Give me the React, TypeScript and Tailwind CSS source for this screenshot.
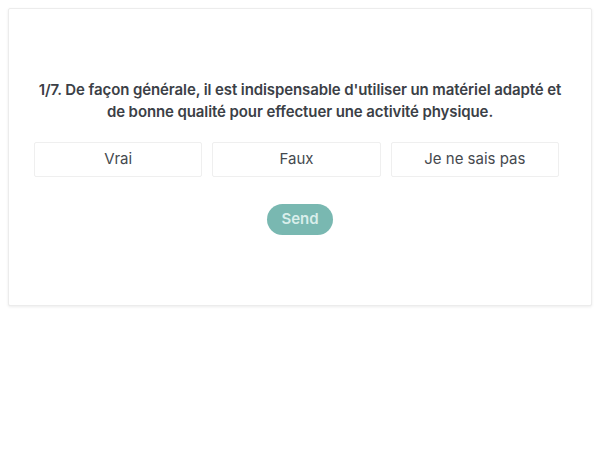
import React, { useState } from 'react';

const options = ['Vrai', 'Faux', 'Je ne sais pas'];

export default function App() {
  const [selected, setSelected] = useState<string | null>(null);

  return (
    <div className="min-h-screen bg-white p-2" style={{ fontFamily: 'Inter, "Noto Sans", sans-serif' }}>
      <div className="w-[584px] bg-white border border-[#ececec] rounded-[2px] shadow-[0_1px_3px_rgba(0,0,0,0.08)] pt-[70px] pb-[70px]">
        <p className="px-[27px] text-center text-[15px] leading-[22px] font-semibold tracking-[-0.1px] text-[#3b4046]">
          1/7. De façon générale, il est indispensable d'utiliser un matériel adapté et de bonne qualité pour effectuer une activité physique.
        </p>

        <div className="ml-[25px] w-[525px] mt-[19px] flex gap-[10px]">
          {options.map((opt) => (
            <button
              key={opt}
              onClick={() => setSelected(opt)}
              className={`flex-1 h-[35px] border border-[#efefef] rounded-[2px] text-[15px] text-[#45494e] ${
                selected === opt ? 'bg-[#f3f8f7]' : 'bg-white'
              }`}
            >
              {opt}
            </button>
          ))}
        </div>

        <div className="mt-[27px] flex justify-center">
          <button className="h-[31px] w-[66px] rounded-full bg-[#79b8b1] text-[15px] font-semibold text-[#d9eeeb]">
            Send
          </button>
        </div>
      </div>
    </div>
  );
}
